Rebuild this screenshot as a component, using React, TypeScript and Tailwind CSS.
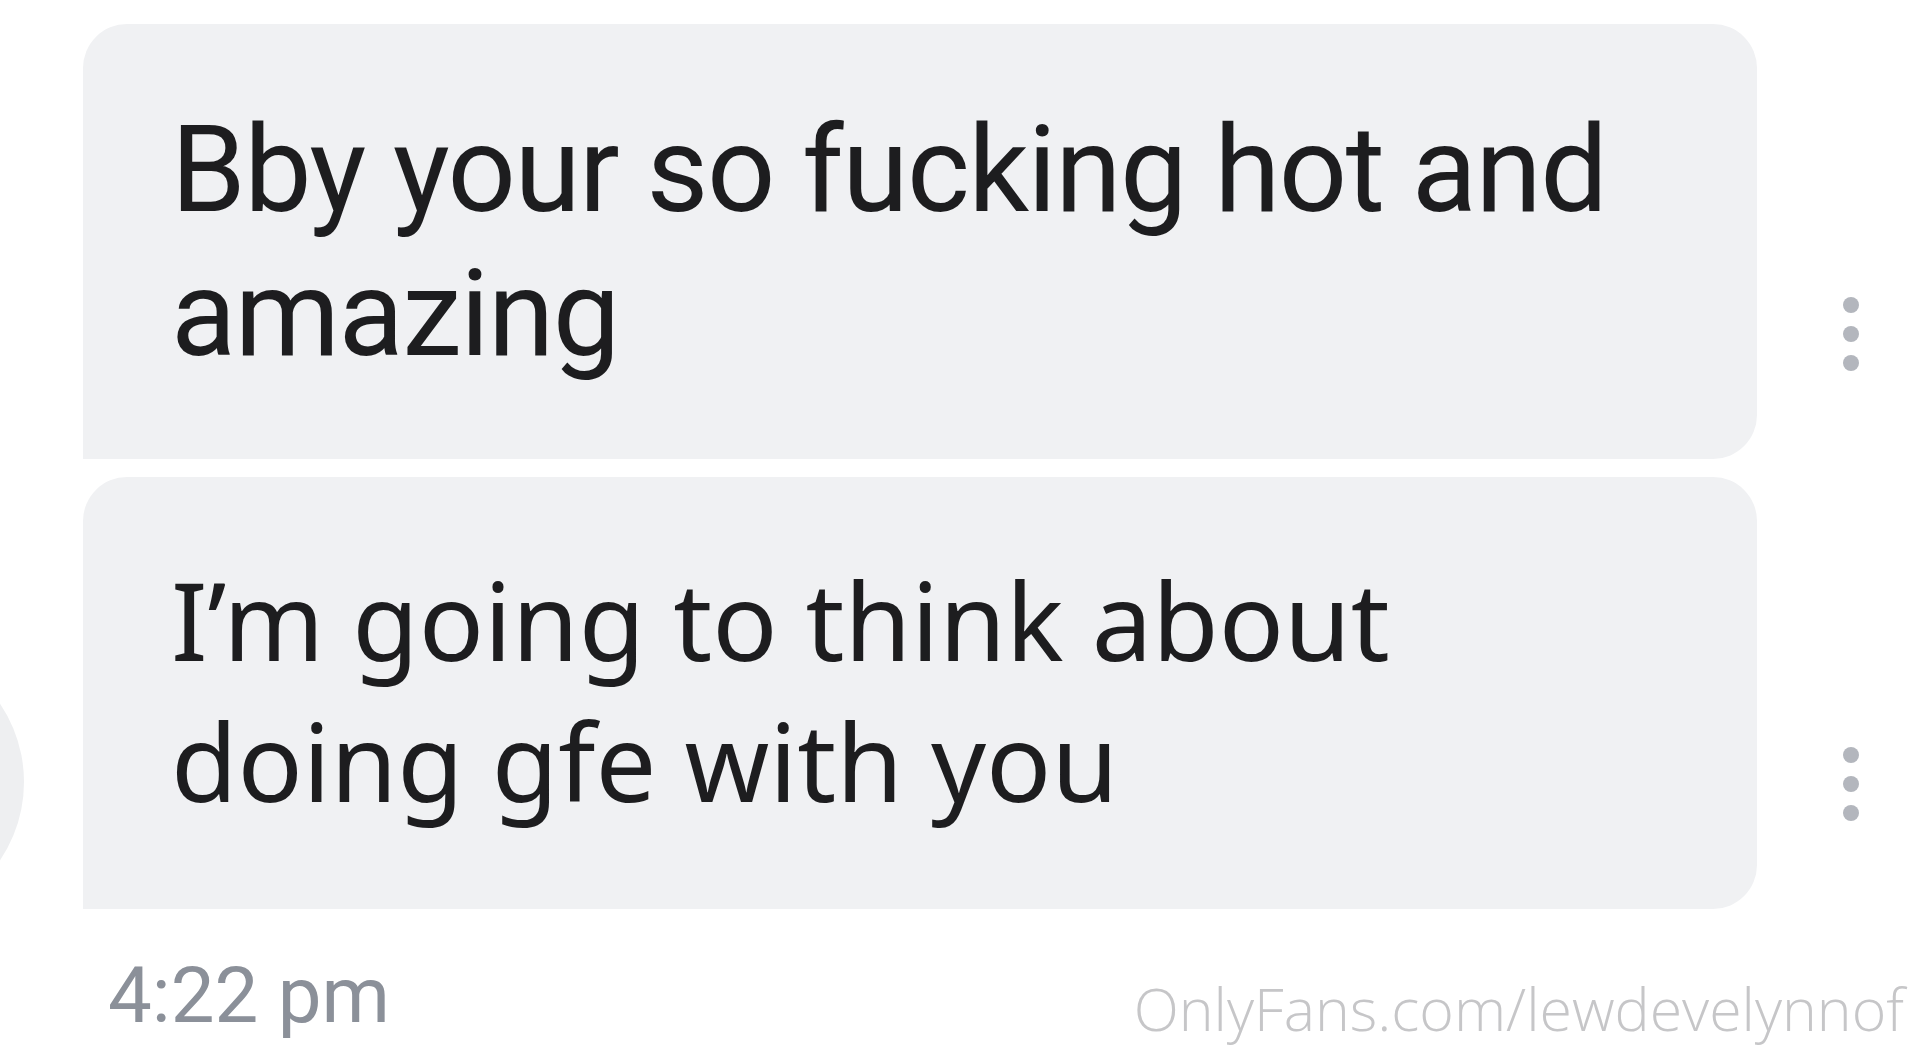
import React from 'react';

const Dots: React.FC = () => (
  <div className="flex flex-col items-center gap-[13px] mb-[88px] w-[16px]">
    <span className="block w-[16px] h-[16px] rounded-full bg-[#b3b6bd]" />
    <span className="block w-[16px] h-[16px] rounded-full bg-[#b3b6bd]" />
    <span className="block w-[16px] h-[16px] rounded-full bg-[#b3b6bd]" />
  </div>
);

const App: React.FC = () => {
  return (
    <div className="relative w-full h-[1056px] overflow-hidden bg-white">
      {/* avatar, mostly off-screen */}
      <div className="absolute left-[-256px] top-[642px] w-[280px] h-[280px] rounded-full bg-[#eeeff1]" />

      <div className="relative flex flex-col pl-[83px] pt-[24px]">
        <div className="flex items-end gap-[86px]">
          <div className="w-[1674px] h-[435px] bg-[#f0f1f3] rounded-t-[44px] rounded-br-[44px] pl-[88px] pt-[74px]">
            <p
              className="text-[120px] leading-[144px] tracking-[-1.5px] text-[#1d1d1f]"
              style={{ fontFamily: 'Roboto, "Liberation Sans", sans-serif' }}
            >
              Bby your so fucking hot and
              <br />
              amazing
            </p>
          </div>
          <Dots />
        </div>

        <div className="flex items-end gap-[86px] mt-[18px]">
          <div className="w-[1674px] h-[432px] bg-[#f0f1f3] rounded-t-[44px] rounded-br-[44px] pl-[88px] pt-[72px]">
            <p
              className="text-[108px] leading-[141px] text-[#1d1d1f]"
              style={{ fontFamily: '"Noto Sans", "Open Sans", sans-serif' }}
            >
              I’m going to think about
              <br />
              doing gfe with you
            </p>
          </div>
          <Dots />
        </div>

        <div className="flex justify-between items-start pr-[16px]">
          <span
            className="mt-[48px] ml-[25px] text-[78px] leading-[78px] text-[#8b9099]"
            style={{ fontFamily: 'Roboto, "Liberation Sans", sans-serif' }}
          >
            4:22 pm
          </span>
          <span
            className="mt-[70px] text-[59px] leading-[59px] font-light text-[#c6c6c8]"
            style={{ fontFamily: '"Open Sans", "Noto Sans", sans-serif' }}
          >
            OnlyFans.com/lewdevelynnof
          </span>
        </div>
      </div>
    </div>
  );
};

export default App;
